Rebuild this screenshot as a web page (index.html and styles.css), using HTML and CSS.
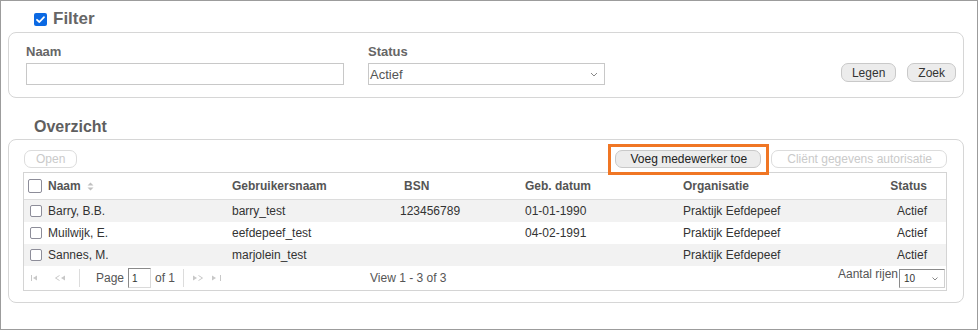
FILE: index.html
```html
<!DOCTYPE html>
<html lang="nl">
<head>
  <meta charset="UTF-8" />
  <title>Medewerkers</title>
  <link rel="stylesheet" href="styles.css">
</head>
<body>
  <div class="frame">
    <div class="filter-title">
      <span class="cb-checked">
        <svg width="13" height="13" viewBox="0 0 13 13"><path d="M3 6.8 L5.4 9 L10 4.2" fill="none" stroke="#fff" stroke-width="1.8" stroke-linecap="round" stroke-linejoin="round"/></svg>
      </span>
      Filter
    </div>

    <div class="panel filter-panel">
      <div class="field field-naam">
        <label>Naam</label>
        <input type="text" class="text-input">
      </div>
      <div class="field field-status">
        <label>Status</label>
        <div class="select-box">
          <span>Actief</span>
          <svg width="8" height="5" viewBox="0 0 8 5"><path d="M1 1 L4 4 L7 1" fill="none" stroke="#888" stroke-width="1"/></svg>
        </div>
      </div>
      <div class="filter-actions">
        <button class="btn">Legen</button>
        <button class="btn">Zoek</button>
      </div>
    </div>

    <div class="overview-title">Overzicht</div>

    <div class="panel overview-panel">
      <div class="toolbar">
        <button class="btn btn-disabled btn-open">Open</button>
        <span class="spacer"></span>
        <button class="btn btn-add highlighted">Voeg medewerker toe</button>
        <button class="btn btn-disabled btn-client">Cliënt gegevens autorisatie</button>
      </div>

      <div class="grid">
        <div class="grid-row grid-head">
          <div class="cell cell-cb"><span class="cb cb-head"></span></div>
          <div class="cell">Naam <svg class="sort-icon" width="7" height="9" viewBox="0 0 7 9"><path d="M0.5 3.5 L3.5 0.5 L6.5 3.5 Z M0.5 5.5 L3.5 8.5 L6.5 5.5 Z" fill="#c0c0c0"/></svg></div>
          <div class="cell">Gebruikersnaam</div>
          <div class="cell cell-bsn">BSN</div>
          <div class="cell">Geb. datum</div>
          <div class="cell">Organisatie</div>
          <div class="cell cell-status">Status</div>
        </div>

        <div class="grid-row grid-item alt">
          <div class="cell cell-cb"><span class="cb"></span></div>
          <div class="cell">Barry, B.B.</div>
          <div class="cell">barry_test</div>
          <div class="cell">123456789</div>
          <div class="cell">01-01-1990</div>
          <div class="cell">Praktijk Eefdepeef</div>
          <div class="cell cell-status">Actief</div>
        </div>
        <div class="grid-row grid-item">
          <div class="cell cell-cb"><span class="cb"></span></div>
          <div class="cell">Muilwijk, E.</div>
          <div class="cell">eefdepeef_test</div>
          <div class="cell"></div>
          <div class="cell">04-02-1991</div>
          <div class="cell">Praktijk Eefdepeef</div>
          <div class="cell cell-status">Actief</div>
        </div>
        <div class="grid-row grid-item alt">
          <div class="cell cell-cb"><span class="cb"></span></div>
          <div class="cell">Sannes, M.</div>
          <div class="cell">marjolein_test</div>
          <div class="cell"></div>
          <div class="cell"></div>
          <div class="cell">Praktijk Eefdepeef</div>
          <div class="cell cell-status">Actief</div>
        </div>

        <div class="pager">
          <div class="pager-nav">
            <svg class="pg-first" width="6" height="6" viewBox="0 0 6 6"><path d="M0.5 0 V6" stroke="#c8c8c8" stroke-width="1"/><path d="M6 0.5 L2 3 L6 5.5 Z" fill="#c8c8c8"/></svg>
            <svg class="pg-prev" width="10" height="6" viewBox="0 0 10 6"><path d="M4.5 0.5 L0.5 3 L4.5 5.5" fill="none" stroke="#c8c8c8" stroke-width="1"/><path d="M10 0.5 L6 3 L10 5.5 Z" fill="#c8c8c8"/></svg>
            <span class="pg-sep"></span>
            <span class="pg-label">Page</span>
            <span class="pg-input">1</span>
            <span class="pg-of">of 1</span>
            <span class="pg-sep pg-sep2"></span>
            <svg class="pg-next" width="10" height="6" viewBox="0 0 10 6"><path d="M0 0.5 L4 3 L0 5.5 Z" fill="#c8c8c8"/><path d="M5.5 0.5 L9.5 3 L5.5 5.5" fill="none" stroke="#c8c8c8" stroke-width="1"/></svg>
            <svg class="pg-last" width="9" height="6" viewBox="0 0 9 6"><path d="M0 0.5 L4 3 L0 5.5 Z" fill="#c8c8c8"/><path d="M8.5 0 V6" stroke="#c8c8c8" stroke-width="1"/></svg>
          </div>
          <div class="pager-info">View 1 - 3 of 3</div>
          <div class="pager-size">
            <span class="size-label">Aantal rijen</span>
            <div class="size-select">
              <span>10</span>
              <svg width="6" height="4" viewBox="0 0 6 4"><path d="M0.5 0.5 L3 3 L5.5 0.5" fill="none" stroke="#888" stroke-width="1"/></svg>
            </div>
          </div>
        </div>
      </div>
    </div>
  </div>
</body>
</html>
```

FILE: styles.css
```css
* {
  margin: 0;
  padding: 0;
  box-sizing: border-box;
  font-family: 'Liberation Sans', Arial, sans-serif;
}

body {
  background: #ffffff;
  color: #333;
}

.frame {
  width: 978px;
  height: 330px;
  border: 1px solid #9c9c9c;
  padding: 0 13px 0 7px;
}

/* section titles */
.filter-title {
  display: flex;
  align-items: center;
  gap: 6px;
  height: 20px;
  margin-top: 8px;
  margin-bottom: 3px;
  padding-left: 26px;
  font-size: 17px;
  font-weight: bold;
  line-height: 20px;
  color: #666;
}

.cb-checked {
  display: inline-flex;
  width: 13px;
  height: 13px;
  border-radius: 2px;
  background: #0b69e3;
}

.overview-title {
  height: 20px;
  margin-top: 19px;
  margin-bottom: 2px;
  padding-left: 26px;
  font-size: 16px;
  font-weight: bold;
  line-height: 20px;
  color: #5f5f5f;
}

.panel {
  border: 1px solid #d6d6d6;
  border-radius: 8px;
}

/* filter */
.filter-panel {
  display: flex;
  align-items: flex-start;
  height: 66px;
  padding: 11px 7px 0 17px;
}

.field label {
  display: block;
  font-size: 13px;
  font-weight: bold;
  line-height: 16px;
  margin-bottom: 3px;
  color: #666;
}

.field-naam {
  width: 318px;
  margin-right: 24px;
}

.text-input {
  display: block;
  width: 318px;
  height: 22px;
  border: 1px solid #c8c8c8;
  background: #fff;
}

.field-status {
  width: 237px;
}

.select-box {
  display: flex;
  align-items: center;
  justify-content: space-between;
  height: 22px;
  padding: 0 6px 0 1px;
  border: 1px solid #c8c8c8;
  font-size: 13px;
  color: #555;
}

.filter-actions {
  display: flex;
  gap: 11px;
  margin-left: auto;
  margin-top: 19px;
}

.btn {
  height: 19px;
  padding: 0 10px;
  font-size: 12px;
  color: #333;
  background: #ececec;
  border: 1px solid #c9c9c9;
  border-radius: 7px;
  cursor: pointer;
}

.btn-disabled {
  background: #fff;
  color: #cacaca;
  border-color: #dcdcdc;
  cursor: default;
}

/* overview */
.overview-panel {
  height: 164px;
  padding: 10px 16px 0 14px;
}

.toolbar {
  display: flex;
  align-items: center;
  gap: 10px;
  height: 18px;
  margin-bottom: 4px;
}

.toolbar .btn {
  height: 18px;
  padding: 0 11px;
}

.btn-open {
  margin-left: 1px;
}

.toolbar .btn-add {
  padding: 0 13px 0 14px;
  color: #222;
}

.toolbar .btn-client {
  padding: 0 14px 0 15px;
}

.spacer {
  flex: 1;
}

.highlighted {
  position: relative;
}

.highlighted::after {
  content: "";
  position: absolute;
  top: -7px;
  left: -8px;
  right: -9px;
  bottom: -8px;
  border: 3px solid #f07624;
  pointer-events: none;
}

/* grid */
.grid {
  border: 1px solid #d4d4d4;
}

.grid-row {
  display: grid;
  grid-template-columns: 24px 184px 168px 125px 158px 162px 100px;
  align-items: center;
  font-size: 12px;
}

.grid-head {
  height: 27px;
  border-bottom: 1px solid #dcdcdc;
  font-weight: bold;
  color: #555;
}

.grid-item {
  height: 22px;
  color: #333;
}

.grid-item.alt {
  background: #f2f2f2;
}

.cell {
  white-space: nowrap;
}

.cell-cb {
  display: flex;
  padding-left: 6px;
}

.grid-head .cell-cb {
  padding-left: 4px;
}

.grid-head .cell-bsn {
  padding-left: 4px;
}

.cell-status {
  text-align: right;
  padding-right: 18px;
}

.cb {
  display: block;
  width: 12px;
  height: 12px;
  border: 1.5px solid #8d8d99;
  border-radius: 2px;
  background: #fff;
}

.cb-head {
  width: 14px;
  height: 14px;
}

.sort-icon {
  margin-left: 3px;
  vertical-align: -1px;
}

/* pager */
.pager {
  display: flex;
  align-items: center;
  height: 24px;
  font-size: 12px;
  color: #555;
}

.pager-nav {
  display: flex;
  align-items: center;
  width: 346px;
  padding-left: 7px;
}

.pg-prev {
  margin-left: 18px;
}

.pg-sep {
  width: 1px;
  height: 18px;
  background: #dcdcdc;
  margin-left: 14px;
}

.pg-label {
  margin-left: 16px;
}

.pg-input {
  width: 23px;
  height: 20px;
  margin-left: 4px;
  padding-left: 3px;
  font-size: 10px;
  line-height: 19px;
  border-top: 1px solid #8a8a8a;
  border-left: 1px solid #8a8a8a;
  border-right: 1px solid #dadada;
  border-bottom: 1px solid #dadada;
  color: #333;
}

.pg-of {
  margin-left: 4px;
}

.pg-sep2 {
  margin-left: 8px;
}

.pg-next {
  margin-left: 9px;
}

.pg-last {
  margin-left: 9px;
}

.pager-info {
  flex: 1;
}

.pager-size {
  display: flex;
  align-items: flex-start;
  align-self: flex-start;
  gap: 1px;
  padding-top: 1px;
  padding-right: 1px;
}

.size-label {
  line-height: 14px;
}

.size-select {
  display: flex;
  align-items: center;
  justify-content: space-between;
  width: 46px;
  height: 19px;
  margin-top: 2px;
  padding: 0 6px 0 4px;
  font-size: 10px;
  color: #333;
  border-top: 1px solid #8a8a8a;
  border-left: 1px solid #8a8a8a;
  border-right: 1px solid #d0d0d0;
  border-bottom: 1px solid #d0d0d0;
}
```
